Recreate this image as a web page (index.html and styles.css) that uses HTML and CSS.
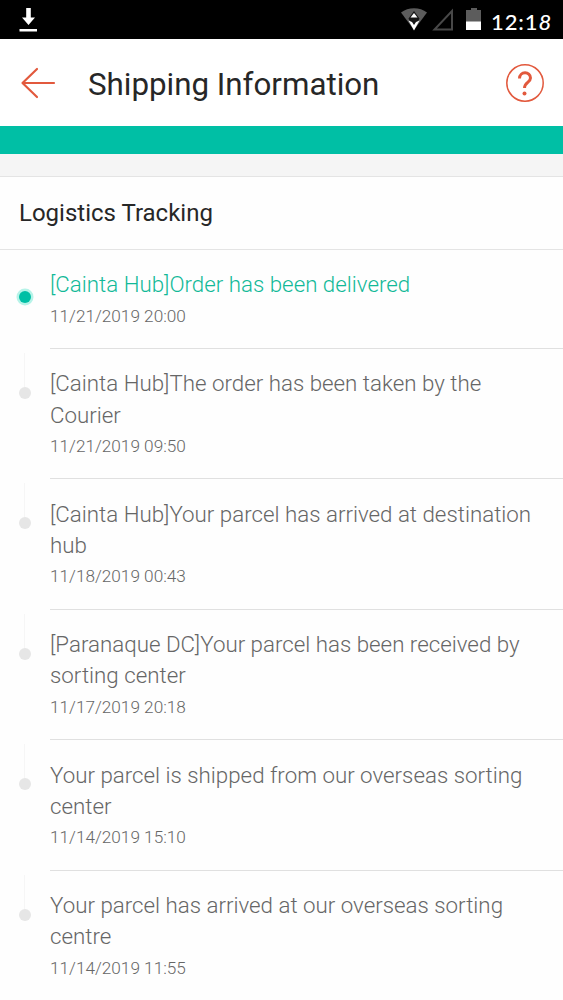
FILE: index.html
```
<!DOCTYPE html>
<html lang="en">
<head>
<meta charset="utf-8">
<title>Shipping Information</title>
<link rel="stylesheet" href="styles.css">
</head>
<body>
<div class="status">
  <svg class="download" width="20" height="26" viewBox="0 0 20 26"><path d="M7.2 1h4.6v9.500h4.200L9.500 18 3 10.500h4.200zM.5 22h17.500v2.400H.5z" fill="#fff"/></svg>
  <div class="indicators">
    <svg width="26" height="24" viewBox="0 0 26 24"><path d="M0 4.500C7-1.200 19-1.200 26 4.500L13 22z" fill="#5c5c5c"/><path d="M13 3l5.500 7.500L13 22.500 7.500 10.500z" fill="#161616"/><path d="M13 5l3.500 4.500h-7z" fill="#fff"/><path d="M7.500 12.500l3.500 1.500 2 3 2-3 3.500-1.500L13 22.500z" fill="#fff"/></svg>
    <svg class="signal" width="22" height="24" viewBox="0 0 22 24"><path d="M2.500 21.500H20V3z" fill="none" stroke="#484848" stroke-width="2"/></svg>
    <svg class="battery" width="16" height="24" viewBox="0 0 16 24"><path d="M5 0h6v2h4v12H0V2h5z" fill="#5c5c5c"/><path d="M0 13.500h15V22H0z" fill="#fff"/></svg>
    <span class="clock">12:1<i>8</i></span>
  </div>
</div>
<header class="header">
  <svg class="back" width="36" height="32" viewBox="0 0 36 32"><path d="M17 2L2.500 16 17 30M2.500 16H34" fill="none" stroke="#e2593d" stroke-width="2.200" stroke-linecap="round" stroke-linejoin="round"/></svg>
  <h1 class="heading">Shipping Information</h1>
  <svg class="help" width="40" height="40" viewBox="0 0 40 40"><circle cx="20" cy="20" r="18.200" fill="none" stroke="#e2593d" stroke-width="1.500"/><path d="M14.500 15.500C14.500 8 25.500 8 25.500 15c0 4.500-6 4.500-6 10" fill="none" stroke="#e2593d" stroke-width="3"/><circle cx="19.500" cy="30.500" r="2" fill="#e2593d"/></svg>
</header>
<div class="banner"></div>
<div class="gap"></div>
<h2 class="section">Logistics Tracking</h2>
<main class="timeline">
  <article class="event current"><i class="dot"></i><p class="text">[Cainta Hub]Order has been delivered</p><time class="date">11/21/2019 20:00</time></article>
  <article class="event"><i class="dot"></i><p class="text">[Cainta Hub]The order has been taken by the<br>Courier</p><time class="date">11/21/2019 09:50</time></article>
  <article class="event"><i class="dot"></i><p class="text">[Cainta Hub]Your parcel has arrived at destination<br>hub</p><time class="date">11/18/2019 00:43</time></article>
  <article class="event"><i class="dot"></i><p class="text">[Paranaque DC]Your parcel has been received by<br>sorting center</p><time class="date">11/17/2019 20:18</time></article>
  <article class="event"><i class="dot"></i><p class="text">Your parcel is shipped from our overseas sorting<br>center</p><time class="date">11/14/2019 15:10</time></article>
  <article class="event"><i class="dot"></i><p class="text">Your parcel has arrived at our overseas sorting<br>centre</p><time class="date">11/14/2019 11:55</time></article>
</main>
</body>
</html>
```
FILE: styles.css
```
* { box-sizing: border-box; }
body { margin: 0; height: 1000px; overflow: hidden; background: #fefefe; font-family: Roboto, sans-serif; color: #272727; }
h1, h2, p { margin: 0; font-weight: 400; white-space: nowrap; }
svg { display: block; flex: none; }
.status { height: 39px; background: #000; display: flex; justify-content: space-between; padding: 7px 12px 0 19px; }
.indicators { display: flex; padding-top: 1px; }
.signal { margin-left: 5px; }
.battery { margin-left: 12px; }
.clock { width: 60px; margin-left: 9px; color: #fff; font: 500 22px/27px Lato, sans-serif; letter-spacing: .9px; white-space: nowrap; }
.header { height: 87px; display: flex; align-items: center; padding: 0 18px 0 20px; background: #fff; }
.heading { flex: 1; margin-left: 32px; padding-top: 5px; font-size: 31.300px; line-height: 40px; }
.banner { height: 28px; background: #00bfa5; }
.gap { height: 23px; background: #f5f5f5; border-bottom: 1px solid #e4e4e4; }
.section { height: 73px; padding-left: 19px; border-bottom: 1px solid #e4e4e4; font-size: 24px; line-height: 72px; }
.timeline { padding-left: 50px; }
.event { position: relative; padding: 19.300px 0 17.100px; border-bottom: 1.500px solid #e0e0e0; color: #666; font-weight: 300; }
.text { font-size: 22.320px; font-weight: 300; line-height: 31.300px; }
.date { display: block; font-size: 17.200px; line-height: 30.400px; }
.current .text { color: #12b998; }
.dot { position: absolute; left: -31px; top: 38px; width: 12px; height: 12px; border-radius: 50%; background: #e6e6e6; }
.dot::before { content: ""; position: absolute; left: 5px; bottom: 12px; width: 1px; height: 34px; background: #f6f6f6; }
.current .dot { top: 41px; background: #00bfa5; box-shadow: 0 0 0 2.500px #b6f3e8; }
.current .dot::before { display: none; }
```
